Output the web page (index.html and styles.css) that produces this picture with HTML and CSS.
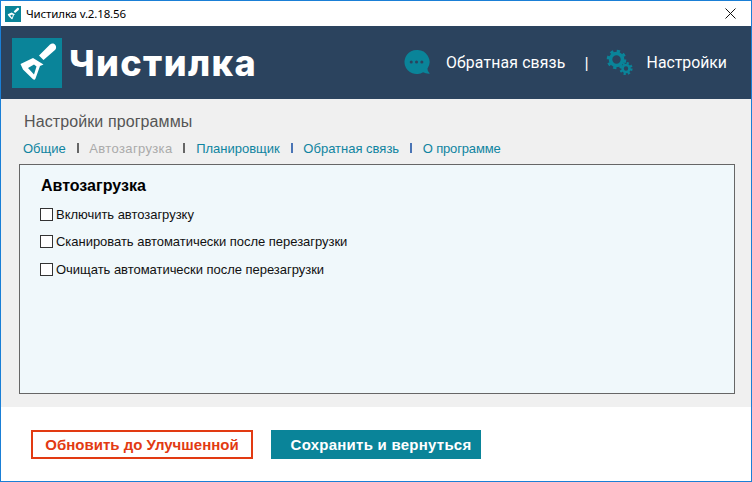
FILE: index.html
```html
<!DOCTYPE html>
<html lang="ru">
<head>
<meta charset="utf-8">
<title>Чистилка</title>
<link rel="stylesheet" href="styles.css">
</head>
<body>
<div class="window">
  <div class="titlebar">
    <svg class="app-icon" viewBox="0 0 50 50">
      <rect width="50" height="50" fill="#0a8499"/>
      <path d="M38 6.500c2-1.500 4.500-1 5.500.8s.8 3.700-.8 5L31.500 22 27 17.500z" fill="#fff"/>
      <path d="M8.500 26 21 20l10.500 6.500-3.500 1.500-4.500 12.500q-.8 2-2.500.8L11 31.500z M16 30l6 6.500 2.500-8-2.500-2z" fill="#fff" fill-rule="evenodd"/>
    </svg>
    <span class="title">Чистилка v.2.18.56</span>
    <svg class="close" viewBox="0 0 11 11"><path d="M.5.5l10 10M10.500.5l-10 10" stroke="#111" stroke-width="1" fill="none"/></svg>
  </div>
  <header class="header">
    <div class="brand">
      <svg class="logo-mark" viewBox="0 0 50 50">
        <rect width="50" height="50" fill="#0a8499"/>
        <path d="M38 6.500c2-1.500 4.500-1 5.500.8s.8 3.700-.8 5L31.500 22 27 17.500z" fill="#fff"/>
        <path d="M8.500 26 21 20l10.500 6.500-3.500 1.500-4.500 12.500q-.8 2-2.500.8L11 31.500z M16 30l6 6.500 2.500-8-2.500-2z" fill="#fff" fill-rule="evenodd"/>
      </svg>
      <span class="logo-text">Чистилка</span>
    </div>
    <nav class="top-nav">
      <svg class="nav-icon" viewBox="0 0 28 28">
        <path d="M13 1a12.500 12.500 0 1 0 6.800 23q3 1.800 7 1.500-2.500-2-2.500-5A12.500 12.500 0 0 0 13 1z" fill="#0a8499"/>
        <circle cx="7.500" cy="13.500" r="1.600" fill="#2b435e"/><circle cx="13" cy="13.500" r="1.600" fill="#2b435e"/><circle cx="18.500" cy="13.500" r="1.600" fill="#2b435e"/>
      </svg>
      <span class="nav-label chat-label">Обратная связь</span>
      <span class="nav-sep">|</span>
      <svg class="nav-icon gears" viewBox="0 0 27 27">
        <g fill="none" stroke="#0a8499">
          <circle cx="10.500" cy="10.500" r="6" stroke-width="3.600"/>
          <circle cx="10.500" cy="10.500" r="8.300" stroke-width="3" stroke-dasharray="3.200 3.320"/>
          <circle cx="20" cy="19.500" r="3.500" stroke-width="2.600"/>
          <circle cx="20" cy="19.500" r="5.400" stroke-width="2.400" stroke-dasharray="2.200 2.040"/>
        </g>
      </svg>
      <span class="nav-label">Настройки</span>
    </nav>
  </header>
  <main class="content">
    <h1 class="page-title">Настройки программы</h1>
    <div class="tabs">
      <a class="tab">Общие</a><i class="tab-sep sep-dark"></i>
      <a class="tab tab-active">Автозагрузка</a><i class="tab-sep sep-dark"></i>
      <a class="tab">Планировщик</a><i class="tab-sep sep-blue"></i>
      <a class="tab">Обратная связь</a><i class="tab-sep sep-blue"></i>
      <a class="tab tab-last">О программе</a>
    </div>
    <section class="panel">
      <h2 class="panel-title">Автозагрузка</h2>
      <label class="option"><span class="box"></span>Включить автозагрузку</label>
      <label class="option"><span class="box"></span>Сканировать автоматически после перезагрузки</label>
      <label class="option"><span class="box"></span>Очищать автоматически после перезагрузки</label>
    </section>
  </main>
  <footer class="footer">
    <button class="btn btn-upgrade">Обновить до Улучшенной</button>
    <button class="btn btn-save">Сохранить и вернуться</button>
  </footer>
</div>
</body>
</html>
```
FILE: styles.css
```css
* { box-sizing: border-box; }
html, body { margin: 0; height: 100%; }
body { font-family: "Liberation Sans", Arial, sans-serif; background: #fff; overflow: hidden; }
.window { width: 752px; height: 482px; border: 1px solid #1a7fd6; display: flex; flex-direction: column; background: #fff; }
.titlebar { height: 25px; flex: none; display: flex; align-items: center; padding: 0 15px 0 4px; }
.app-icon { width: 16px; height: 16px; margin-right: 5px; }
.title { font-family: "Noto Sans", sans-serif; font-size: 11.500px; color: #000; flex: 1; letter-spacing: -.15px; }
.close { width: 11px; height: 11px; }
.header { height: 73px; flex: none; background: #2b435e; display: flex; align-items: center; justify-content: space-between; padding: 0 24px 0 11px; }
.brand { display: flex; align-items: center; gap: 7px; }
.logo-mark { width: 50px; height: 50px; }
.logo-text { font-family: Inter, sans-serif; font-weight: 800; font-size: 36px; color: #fff; line-height: 1; letter-spacing: 1.400px; }
.top-nav { display: flex; align-items: center; color: #fff; }
.nav-icon { width: 27px; height: 27px; margin-right: 15px; }
.nav-icon.gears { width: 27px; height: 27px; margin-right: 14px; }
.nav-label { font-family: Roboto, sans-serif; font-size: 15.800px; }
.chat-label { letter-spacing: .15px; }
.nav-sep { font-family: Roboto, sans-serif; font-size: 17px; margin: 0 17px 0 19px; }
.content { height: 308px; flex: none; background: #f0f0f0; padding: 13px 16px 13px 18px; display: flex; flex-direction: column; }
.page-title { margin: 0 0 0 5px; font-weight: 400; font-size: 16px; line-height: 20px; color: #555; letter-spacing: .1px; }
.tabs { display: flex; align-items: center; margin: 8px 0 0 4px; height: 16px; font-size: 13px; }
.tab { color: #0f84a0; }
.tab-active { color: #aaa; letter-spacing: .36px; }
.tab-last { letter-spacing: -.15px; }
.tab-sep { width: 2px; height: 10px; margin: 0 10.800px; flex: none; }
.sep-dark { background: #666; }
.sep-blue { background: #4a74b5; }
.panel { margin-top: 8px; flex: 1; background: #f0f8fb; border: 1px solid #666; padding: 11px 20px; }
.panel-title { margin: 0 0 0 1px; font-size: 16px; line-height: 20px; font-weight: 700; color: #000; }
.option { display: flex; align-items: center; height: 15px; margin-top: 12px; font-size: 13px; letter-spacing: -.03px; color: #111; }
.panel-title + .option { margin-top: 11px; }
.option + .option + .option { margin-top: 13px; }
.box { width: 13px; height: 13px; border: 1px solid #333; background: #fff; margin-right: 3px; flex: none; }
.footer { flex: 1; display: flex; align-items: flex-start; gap: 18px; padding: 23px 0 0 30px; }
.btn { height: 29px; font-family: "Liberation Sans", Arial, sans-serif; font-size: 15px; font-weight: 700; padding: 0; }
.btn-upgrade { width: 222px; background: #fff; border: 2px solid #e23a12; color: #e23a12; }
.btn-save { width: 210px; background: #0a8499; border: 0; color: #fff; letter-spacing: .25px; padding-left: 10px; }
```
